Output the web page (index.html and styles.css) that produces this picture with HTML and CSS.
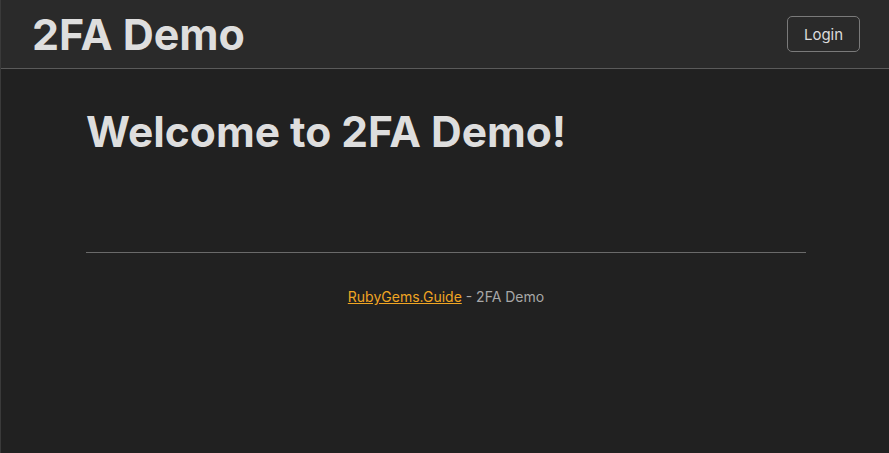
FILE: index.html
```html
<!DOCTYPE html>
<html>
<head>
<meta charset="utf-8">
<link rel="stylesheet" href="styles.css">
</head>
<body>
<header class="topbar">
  <div class="brand">2FA Demo</div>
  <a class="login" href="#">Login</a>
</header>
<main class="content">
  <h1 class="welcome">Welcome to 2FA Demo!</h1>
  <hr class="rule">
  <footer class="foot"><a href="#">RubyGems.Guide</a> - 2FA Demo</footer>
</main>
</body>
</html>
```
FILE: styles.css
```css
html, body {
  margin: 0;
  padding: 0;
  height: 100%;
}
body {
  background: #212121;
  font-family: Inter, "Noto Sans", sans-serif;
  color: #e0e0e0;
  border-left: 1px solid #3a3a3a;
  box-sizing: border-box;
}
.topbar {
  height: 68px;
  background: #2a2a2a;
  border-bottom: 1px solid #5a5a5a;
  display: flex;
  align-items: center;
  justify-content: space-between;
  padding: 0 29px 0 31px;
}
.brand {
  font-size: 43px;
  font-weight: 700;
  color: #dedede;
  line-height: 50px;
}
.login {
  display: flex;
  align-items: center;
  justify-content: center;
  width: 73px;
  height: 36px;
  box-sizing: border-box;
  border: 1px solid #7a7a7a;
  border-radius: 5px;
  color: #dcdcdc;
  font-size: 15px;
  text-decoration: none;
}
.content {
  width: 720px;
  margin-left: 85px;
  padding-top: 38px;
}
.welcome {
  margin: 0;
  font-size: 42.5px;
  font-weight: 700;
  color: #dedede;
  line-height: 50px;
}
.rule {
  margin: 95px 0 0 0;
  border: 0;
  border-top: 1px solid #6a6a6a;
}
.foot {
  text-align: center;
  margin-top: 35px;
  font-size: 14px;
  color: #a8a8a8;
}
.foot a {
  color: #f0a523;
}
```
